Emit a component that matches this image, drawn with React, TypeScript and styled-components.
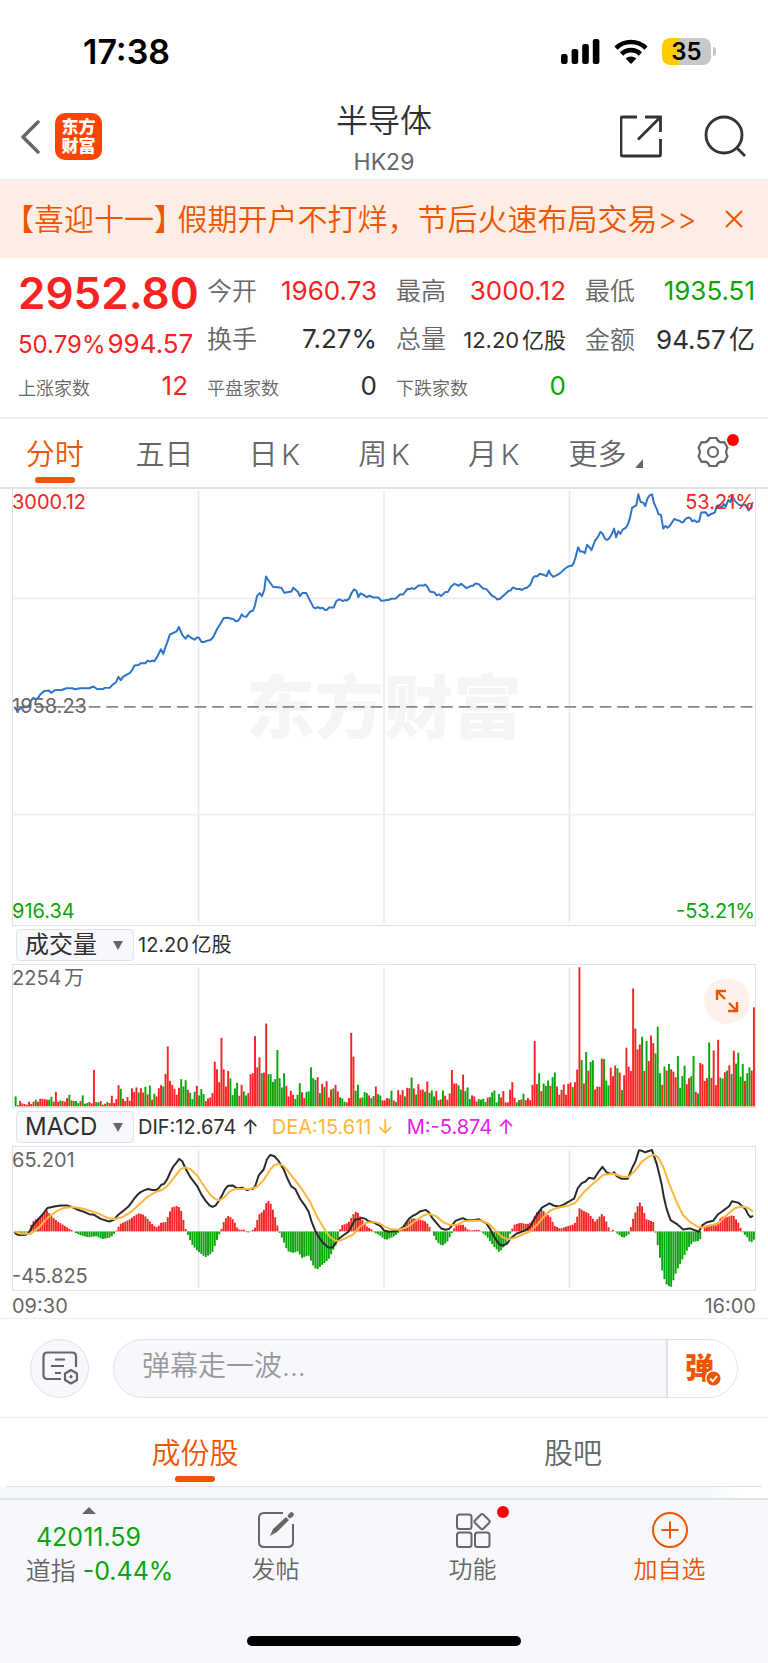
import React, { useId, useState } from 'react';
import styled, { createGlobalStyle, css } from 'styled-components';

const color = {
  accent: '#ee5500',
  up: '#f72323',
  down: '#0aa50a',
  ink: '#2f2f2f',
  label: '#666666',
  muted: '#999999',
  line: '#dfe2e8',
  grid: '#e6eaf1',
  panel: '#f7f8fb',
  dea: '#fdb73a',
  macd: '#e020e6',
};

const GlobalStyle = createGlobalStyle`
  *, *::before, *::after { box-sizing: border-box; }
  body {
    margin: 0;
    background: #fff;
    color: ${color.ink};
    font-family: Inter, "Noto Sans CJK SC", sans-serif;
    font-size: 24px;
    font-weight: 400;
    text-autospace: normal;
  }
  button, input, select { font: inherit; color: inherit; }
  button { border: 0; padding: 0; background: none; cursor: pointer; }
  a { color: inherit; text-decoration: none; }
  svg { display: block; }
`;

type Tone = 'up' | 'down' | 'ink' | 'label' | 'accent' | 'dea' | 'macd';

/* ---------- status bar and title ---------- */

const StatusBar = styled.div`
  display: flex;
  align-items: center;
  justify-content: space-between;
  height: 92px;
  padding: 10px 52px 0 83px;
  color: #000;
`;

const Clock = styled.time`
  font-size: 34px;
  font-weight: 600;
`;

const StatusIcons = styled.div`
  display: flex;
  align-items: center;
  gap: 14px;
`;

const Battery = styled.div`
  display: flex;
  align-items: center;
  gap: 2px;

  &::after {
    content: '';
    width: 3px;
    height: 9px;
    border-radius: 0 4px 4px 0;
    background: #c8c8c8;
  }
`;

const BatteryCell = styled.span<{ $level: number }>`
  width: 49px;
  height: 27px;
  border-radius: 8px;
  background: linear-gradient(90deg, #fc0 ${(p) => p.$level}%, #c8c8c8 ${(p) => p.$level}%);
  font-size: 24px;
  font-weight: 600;
  line-height: 27px;
  text-align: center;
`;

const Header = styled.header`
  display: grid;
  grid-template-columns: 1fr auto 1fr;
  align-items: center;
  height: 89px;
  padding: 0 20px;
  border-bottom: 2px solid #eceef2;
`;

const HeaderSide = styled.div<{ $end?: boolean }>`
  display: flex;
  align-items: center;
  justify-content: ${(p) => (p.$end ? 'flex-end' : 'flex-start')};
  gap: ${(p) => (p.$end ? 40 : 15)}px;
`;

const Logo = styled.a`
  display: grid;
  place-content: center;
  width: 47px;
  height: 47px;
  border-radius: 10px;
  background: #ff4400;
  color: #fff;
  font-size: 17px;
  font-weight: 900;
  line-height: 19px;
`;

const Titles = styled.div`
  display: flex;
  flex-direction: column;
  align-items: center;
  padding-top: 7px;
`;

const Title = styled.h1`
  margin: 0;
  font-size: 32px;
  font-weight: 350;
  line-height: 44px;
`;

const Code = styled.span`
  color: ${color.label};
  font-size: 23px;
  line-height: 38px;
`;

/* ---------- notice ---------- */

const Notice = styled.aside`
  display: flex;
  align-items: center;
  justify-content: space-between;
  height: 77px;
  padding: 0 25px 2px 19px;
  background: #fdede5;
  color: ${color.accent};
  white-space: nowrap;
`;

const NoticeText = styled.a`
  font-size: 30px;
  font-weight: 350;
  line-height: 40px;
`;

const HalfWidth = styled.span`
  font-feature-settings: 'halt';
`;

/* ---------- quote ---------- */

const Quote = styled.section`
  display: grid;
  grid-template-columns: repeat(4, minmax(0, 1fr));
  grid-auto-rows: 48px;
  align-items: center;
  column-gap: 19px;
  height: 161px;
  padding: 7px 13px 0 18px;
  border-bottom: 2px solid #eeeff2;
  white-space: nowrap;
`;

const Price = styled.strong`
  padding-top: 8px;
  color: ${color.up};
  font-size: 44px;
  font-weight: 600;
  line-height: 48px;
`;

const Change = styled.div`
  display: flex;
  align-items: baseline;
  gap: 2px;
  padding-top: 12px;
  color: ${color.up};
`;

const Stat = styled.div`
  display: flex;
  align-items: baseline;
  justify-content: space-between;
`;

const StatLabel = styled.span<{ $small?: boolean }>`
  color: ${color.label};
  font-size: ${(p) => (p.$small ? 18 : 25)}px;
  font-weight: 350;
`;

const Value = styled.span<{ $tone?: Tone; $size?: 22 | 24 | 26 }>`
  color: ${(p) => color[p.$tone ?? 'ink']};
  font-size: ${(p) => p.$size ?? 26}px;
`;

/* ---------- tabs ---------- */

const PeriodTabs = styled.nav`
  display: grid;
  grid-template-columns: repeat(7, minmax(0, 1fr));
  height: 70px;
  border-bottom: 2px solid ${color.line};
`;

const Tab = styled.button<{ $active?: boolean }>`
  position: relative;
  display: flex;
  align-items: center;
  justify-content: center;
  gap: 4px;
  padding-bottom: 2px;
  color: ${(p) => (p.$active ? color.accent : color.label)};
  font-size: 29px;
  font-weight: 350;

  ${(p) =>
    p.$active &&
    css`
      &::after {
        content: '';
        position: absolute;
        bottom: 4px;
        left: calc(50% - 20px);
        width: 40px;
        height: 6px;
        border-radius: 3px;
        background: ${color.accent};
      }
    `}
`;

const MoreTab = styled(Tab)`
  padding-left: 5px;
`;

const Corner = styled.svg`
  align-self: flex-end;
  margin: 0 0 17px 5px;
`;

const IconWithDot = styled.span`
  position: relative;
`;

const RedDot = styled.i<{ $far?: boolean }>`
  position: absolute;
  top: ${(p) => (p.$far ? -6 : -2)}px;
  right: ${(p) => (p.$far ? -18 : -10)}px;
  width: 12px;
  height: 12px;
  border-radius: 50%;
  background: #ff0000;
`;

/* ---------- charts ---------- */

const Charts = styled.section`
  padding: 0 12px;
`;

const Plot = styled.div<{ $height: number }>`
  position: relative;
  height: ${(p) => p.$height}px;
  border: solid ${color.line};
  border-width: 0 1px 1px;

  & > svg {
    position: relative;
    width: 100%;
    height: 100%;
  }
`;

const markPlace = {
  top: 'top: 0;',
  middle: 'top: calc(50% - 14px);',
  bottom: 'bottom: 0;',
};

const Mark = styled.span<{ $tone: Tone; $v: keyof typeof markPlace; $end?: boolean }>`
  position: absolute;
  ${(p) => (p.$end ? 'right: 0;' : 'left: -1px;')}
  ${(p) => markPlace[p.$v]}
  color: ${(p) => color[p.$tone]};
  font-size: 20px;
  line-height: 27px;
`;

const Watermark = styled.span`
  position: absolute;
  inset: 0;
  display: grid;
  place-items: center;
  padding-bottom: 8px;
  color: #f5f5f5;
  font-size: 69px;
  font-weight: 900;
`;

const IndicatorBar = styled.div`
  display: flex;
  align-items: center;
  gap: 4px;
  height: 39px;
  padding-left: 4px;
  border-bottom: 1px solid ${color.line};
`;

const Picker = styled.label`
  position: relative;
  display: block;
  width: 118px;
  height: 32px;

  svg {
    position: absolute;
    top: 12px;
    right: 11px;
    pointer-events: none;
  }
`;

const PickerSelect = styled.select`
  appearance: none;
  display: block;
  width: 100%;
  height: 100%;
  padding: 0 0 0 8px;
  border: 1px solid ${color.line};
  border-radius: 4px;
  background: ${color.panel};
  font-size: 24px;
  line-height: 28px;
`;

const Reading = styled.span<{ $tone: Tone }>`
  margin-right: 9px;
  color: ${(p) => color[p.$tone]};
  font-size: 20px;
  line-height: 28px;
`;

const ExpandButton = styled.button`
  position: absolute;
  top: 13px;
  right: 5px;
  display: grid;
  place-items: center;
  width: 46px;
  height: 46px;
  border-radius: 50%;
  background: #fdf1eb;
`;

const TimeAxis = styled.div`
  display: flex;
  justify-content: space-between;
  height: 27px;
  color: ${color.label};
  font-size: 20px;
  line-height: 31px;
`;

/* ---------- comment bar ---------- */

const CommentBar = styled.form`
  display: flex;
  align-items: center;
  gap: 24px;
  height: 100px;
  padding: 0 30px;
  border: solid #eceef2;
  border-width: 1px 0;
`;

const RoundButton = styled.button`
  display: grid;
  place-items: center;
  width: 59px;
  height: 59px;
  border: 1px solid ${color.line};
  border-radius: 50%;
  background: ${color.panel};
  color: ${color.label};
`;

const Pill = styled.div`
  display: flex;
  flex: 1;
  height: 59px;
  overflow: hidden;
  border: 1px solid ${color.line};
  border-radius: 30px;
  background: ${color.panel};
`;

const CommentInput = styled.input`
  flex: 1;
  min-width: 0;
  padding: 0 0 4px 28px;
  border: 0;
  outline: 0;
  background: none;
  font-size: 28px;
  font-weight: 350;

  &::placeholder {
    color: ${color.muted};
    opacity: 1;
  }
`;

const BulletToggle = styled.button`
  position: relative;
  width: 71px;
  padding: 0 6px 5px 0;
  border-left: 2px solid ${color.line};
  background: #fff;
  color: ${color.accent};
  font-size: 29px;
  font-weight: 900;

  svg {
    position: absolute;
    right: 15px;
    bottom: 10px;
  }
`;

/* ---------- bottom ---------- */

const SectionTabs = styled.nav`
  display: grid;
  grid-template-columns: 1fr 1fr;
  height: 69px;
  margin: 0 6px;
  border-bottom: 1px solid ${color.line};
`;

const Spacer = styled.div`
  height: 11px;
  background: linear-gradient(90deg, ${color.panel} 92%, #fff 96%);
`;

const BottomBar = styled.footer`
  padding-bottom: 17px;
  border-top: 2px solid ${color.line};
  background: ${color.panel};
`;

const Actions = styled.nav`
  display: grid;
  grid-template-columns: 177fr 197fr 197fr 197fr;
  height: 136px;
`;

const IndexLink = styled.a`
  display: flex;
  flex-direction: column;
  align-items: center;
  padding-top: 7px;
  color: ${color.down};
  font-size: 25px;
  line-height: 34px;
  white-space: nowrap;

  svg {
    margin-bottom: 6px;
  }
`;

const IndexRow = styled.span`
  display: flex;
  align-items: baseline;
  gap: 7px;
  padding-left: 22px;
`;

const Action = styled.button<{ $accent?: boolean }>`
  display: flex;
  flex-direction: column;
  align-items: center;
  gap: 4px;
  padding-top: 12px;
  color: ${(p) => (p.$accent ? color.accent : color.label)};
  font-size: 24px;
  font-weight: 350;
  line-height: 36px;
`;

const HomeIndicator = styled.div`
  width: 274px;
  height: 10px;
  margin: 0 auto;
  border-radius: 5px;
  background: #000;
`;

/* ---------- data ---------- */

/* Turnover per minute; a negative value marks a minute that closed lower. */
const volume = [
  -30, 4, 16, 9, 7, 5, 14, 7, 14, -20, 14, 23, 23, 22, 20, -20, -29, 14, 44, 14, -18, 16, 14, 25, -35, 18, -16, -16,
  -10, 16, -33, -8, -10, 13, 9, 110, -13, -12, 16, -5, 8, -13, 10, 32, 10, 22, 64, -53, 23, 16, 28, 17, 54, 44, 57,
  -42, 55, 42, -59, 36, -63, 20, -38, 30, 55, 64, -60, 98, 181, 77, 65, 53, 35, 56, -82, -60, -79, 50, -41, -22, -44,
  62, -33, -52, -37, 16, 24, 27, 40, 135, 112, 73, 207, 112, 60, 107, -84, -34, -54, -71, 32, 65, -45, -33, 40, 97,
  100, 212, 118, 148, -100, 102, 250, -97, -97, -74, -82, -170, -85, -57, -100, 62, 30, 47, 35, -22, -35, -70, 43, 25,
  -43, -45, -118, -85, -80, 88, -40, 68, -58, 76, 27, 51, -54, 65, 45, -27, -24, -14, 12, 25, 222, 150, -47, -65, 25,
  -27, -43, -40, 33, -25, -31, 60, -37, -33, 18, 18, 25, 23, -47, 18, -13, 49, 35, 49, -30, 56, 55, -87, 54, -36, 67,
  50, 51, -44, 75, -41, -48, -30, 46, -18, 21, -48, 32, 20, 39, 110, 69, 69, -63, -51, 96, -46, -57, -22, 33, 30, 15,
  -22, -20, -23, -13, 26, -28, -42, -48, -12, -37, 27, 46, 12, 12, 50, 73, 26, -12, -19, 21, -38, 19, 25, 19, 65, 197,
  67, -100, 46, -69, -62, -78, 62, -88, -102, 60, 35, 50, 66, 35, 68, 72, -58, 73, 111, 420, -140, 69, -164, 108, -134,
  -139, 51, 60, 59, 144, -143, -78, -63, 117, 91, 123, -115, 102, -49, 94, 177, 120, 107, 356, 235, 172, 187, -210,
  107, -198, 137, 214, 191, -160, -241, -100, 65, -120, 108, -128, 112, 105, 88, -152, -56, -92, -123, 67, 85, -91,
  -152, 44, -39, 131, 127, 77, 85, -193, 86, 169, 64, 201, -87, -84, 103, -108, 124, -98, 168, -129, -162, -90, -128,
  77, -100, -118, 108, 299,
];

const pricePath =
  '40,682 50,696 57,687 66,684 84,680 90,664 97,655 104,660 112,655 117,646 131,634 144,633 151,640 162,632 172,631 180,632 197,626 214,626 222,629 238,626 265,626 278,621 290,629 300,628 306,629 312,625 327,625 333,618 346,608 353,592 360,602 367,592 378,585 388,580 394,572 401,558 414,556 420,551 434,551 441,543 448,546 455,543 461,545 470,531 481,509 488,523 494,504 500,488 508,464 518,460 528,455 535,442 546,467 555,477 562,467 570,473 582,480 590,473 596,475 603,487 612,487 620,483 630,481 638,473 650,448 660,432 670,415 684,414 690,417 697,417 707,425 713,423 718,417 724,404 730,410 738,411 750,395 758,393 764,376 770,349 778,340 785,349 792,330 797,290 803,300 818,321 843,324 852,339 874,335 879,324 893,336 899,349 906,340 918,340 926,356 940,383 946,386 953,382 960,386 967,384 975,391 981,390 987,383 1001,383 1008,365 1015,359 1022,360 1028,364 1034,361 1040,362 1047,357 1055,339 1062,329 1069,333 1075,352 1081,341 1088,344 1100,352 1108,348 1120,353 1135,353 1143,363 1152,362 ' +
  '1167,360 1174,357 1188,356 1200,344 1210,344 1222,328 1230,328 1236,325 1243,328 1256,317 1272,317 1276,314 1282,320 1290,335 1304,338 1310,347 1318,344 1324,349 1336,337 1344,337 1354,320 1364,312 1377,318 1384,312 1400,325 1407,322 1414,318 1420,318 1427,311 1437,313 1450,326 1460,328 1477,348 1485,352 1493,359 1501,357 1522,338 1527,333 1533,332 1539,323 1552,328 1562,328 1567,331 1573,326 1582,324 1592,315 1601,293 1606,289 1614,289 1620,282 1632,285 1641,289 1648,272 1653,283 1661,291 1672,286 1682,280 1697,266 1708,259 1717,258 1723,249 1729,229 1736,202 1742,215 1750,215 1756,220 1763,195 1770,202 1776,211 1787,182 1795,172 1803,156 1809,161 1817,177 1823,180 1830,175 1838,161 1844,146 1850,172 1857,154 1863,162 1870,149 1880,143 1887,130 1892,113 1898,84 1911,76 1917,43 1924,66 1932,68 1938,78 1944,57 1951,46 1958,43 1964,69 1972,86 1978,103 1985,105 1992,146 1999,138 2005,144 2013,136 2025,117 2032,120 2040,122 2047,127 2052,127 2059,117 2067,113 2073,114 2079,124 2086,121 2092,126 2100,124 2106,98 2120,97 2127,108 2136,102 2147,98 2153,78 2160,76 2167,84 2174,72 2180,80 2188,60 2194,66 2200,46 2207,62 2219,74 2228,77 2239,74 2249,91 2256,83 2261,66';

const difPath =
  '40,395 47,402 55,404 75,403 85,395 94,378 110,358 125,342 140,322 160,318 180,315 200,315 215,320 235,329 250,334 265,341 280,343 300,355 325,363 340,358 350,345 370,329 385,316 400,295 410,283 420,274 430,269 442,265 455,268 467,268 475,262 482,252 490,250 500,235 510,212 520,194 528,185 536,174 545,181 555,203 570,230 590,256 603,282 615,300 627,314 636,319 645,315 655,301 665,284 673,267 683,255 697,254 710,263 725,261 740,268 750,265 757,265 765,255 775,224 790,206 800,175 810,162 822,166 835,180 850,205 860,230 873,257 885,265 900,295 912,312 925,333 935,366 947,395 957,412 970,429 985,442 998,441 1010,423 1020,412 1035,401 1045,394 1055,376 1065,357 1075,356 1087,352 1098,356 1105,362 1120,366 1130,371 1142,377 ' +
  '1152,390 1167,394 1192,392 1210,379 1227,355 1237,347 1249,341 1260,333 1277,328 1287,335 1297,352 1312,370 1324,384 1337,388 1347,386 1357,375 1367,361 1389,353 1402,359 1422,359 1437,356 1447,362 1460,369 1472,387 1487,415 1499,432 1509,436 1522,430 1532,415 1550,400 1577,390 1592,378 1607,350 1627,321 1642,313 1650,308 1662,315 1677,318 1692,312 1712,301 1724,294 1735,262 1747,247 1757,243 1769,231 1784,234 1797,214 1809,198 1822,215 1837,220 1844,214 1852,226 1867,234 1885,234 1897,205 1909,180 1919,148 1927,149 1937,154 1958,147 1964,165 1972,188 1980,220 1987,250 1994,290 2002,325 2014,359 2032,370 2052,387 2072,384 2099,394 2110,374 2122,366 2142,361 2157,341 2170,332 2190,317 2199,302 2217,306 2230,317 2239,325 2248,343 2255,350 2262,346';

const deaPath =
  '40,393 60,400 90,400 115,380 140,352 170,330 190,322 215,319 245,324 290,338 320,352 340,356 365,350 390,335 420,307 440,289 465,274 485,267 500,256 520,231 540,205 555,200 570,205 590,224 610,255 630,283 645,296 657,299 672,290 688,272 705,265 750,265 770,258 790,238 810,206 822,193 835,189 850,195 880,232 905,265 930,305 950,347 975,390 990,410 1005,421 1020,421 1040,412 1060,402 1080,378 1100,366 1125,365 1140,369 ' +
  '1152,378 1172,386 1197,388 1222,380 1247,361 1272,344 1287,340 1307,346 1332,366 1352,374 1372,373 1392,362 1442,360 1467,370 1487,390 1507,410 1527,417 1547,412 1567,403 1592,393 1612,373 1632,350 1652,330 1672,322 1707,315 1727,307 1752,276 1777,252 1797,235 1812,222 1842,219 1867,227 1887,229 1907,210 1927,183 1947,168 1964,161 1977,170 1992,198 2012,255 2032,304 2052,344 2072,364 2092,377 2107,381 2132,375 2157,369 2182,345 2207,323 2227,318 2245,321 2262,333';

/* Turning points of the MACD histogram: x, height above the zero line. */
const macdKnots: [number, number][] = [
  [40, -4], [75, -4], [84, 0], [90, 18], [100, 35], [115, 40], [138, 63], [145, 55], [155, 43], [170, 30], [190, 18],
  [205, 8], [218, 2], [222, -3], [240, -12], [265, -18], [285, -14], [305, -23], [330, -18], [343, -4], [350, 8],
  [358, 22], [385, 35], [413, 55], [430, 50], [455, 22], [467, 12], [478, 20], [485, 32], [492, 22], [505, 50],
  [512, 72], [530, 77], [540, 70], [550, 30], [556, 5], [562, -10], [575, -40], [590, -58], [615, -78], [635, -65],
  [650, -25], [658, -5], [665, 12], [672, 35], [685, 48], [700, 34], [712, 8], [720, 4], [730, 6], [738, -3],
  [748, -3], [756, 3], [765, 12], [775, 50], [790, 62], [800, 92], [808, 92], [820, 60], [833, 12], [838, -4],
  [850, -30], [862, -60], [880, -65], [893, -60], [905, -80], [925, -72], [940, -105], [950, -116], [965, -102],
  [985, -85], [1000, -55], [1013, -30], [1019, 4], [1024, 18], [1045, 26], [1060, 52], [1070, 62], [1085, 38],
  [1100, 15], [1115, 6], [1120, -2], [1140, -12], [1152, -23], [1160, -25], [1182, -15], [1196, -4], [1204, 6],
  [1217, 22], [1237, 40], [1262, 35], [1277, 30], [1287, 18], [1294, 4], [1298, -4], [1312, -32], [1327, -44],
  [1342, -32], [1355, -8], [1362, 8], [1372, 20], [1390, 20], [1402, 7], [1414, 2], [1427, 5], [1442, 4], [1448, -4],
  [1462, -16], [1482, -45], [1499, -63], [1514, -45], [1530, -10], [1536, 4], [1544, 20], [1562, 26], [1582, 22],
  [1597, 28], [1612, 58], [1627, 68], [1637, 55], [1652, 45], [1664, 18], [1682, 8], [1702, 15], [1725, 22],
  [1732, 40], [1740, 70], [1752, 62], [1767, 55], [1787, 30], [1810, 55], [1820, 32], [1832, 0], [1842, 5],
  [1852, -5], [1872, -20], [1889, -8], [1894, 10], [1902, 40], [1920, 90], [1932, 70], [1939, 38], [1964, 28],
  [1969, -5], [1977, -50], [1992, -135], [2002, -160], [2015, -170], [2032, -120], [2052, -80], [2067, -50],
  [2082, -32], [2102, -28], [2109, -5], [2114, 15], [2132, 20], [2152, 18], [2167, 45], [2182, 42], [2202, 50],
  [2217, 28], [2227, 5], [2232, -4], [2247, -20], [2255, -38], [2262, -25],
];

const minuteX = (i: number) => 44 + i * 6.73;

function heightAt(x: number) {
  const next = macdKnots.findIndex((k) => k[0] >= x);
  if (next <= 0) return macdKnots[next === 0 ? 0 : macdKnots.length - 1][1];
  const [x0, y0] = macdKnots[next - 1];
  const [x1, y1] = macdKnots[next];
  return y0 + ((y1 - y0) * (x - x0)) / (x1 - x0);
}

const macdBars = volume.map((_, i) => heightAt(minuteX(i)));

/* ---------- chart pieces ---------- */

function Columns({ top, bottom }: { top: number; bottom: number }) {
  return (
    <g stroke={color.grid} strokeWidth="5">
      {[594, 1152, 1710].map((x) => (
        <path key={x} d={`M${x} ${top}V${bottom}`} />
      ))}
    </g>
  );
}

/* Bars from a base line; with `split`, negative values hang below it. */
function Bars({ values, base, split }: { values: number[]; base: number; split?: boolean }) {
  return (
    <g>
      {values.map((v, i) => (
        <rect
          key={i}
          x={minuteX(i) - 3}
          y={split && v < 0 ? base : base - Math.abs(v)}
          width="5.8"
          height={Math.abs(v)}
          fill={v < 0 ? color.down : color.up}
        />
      ))}
    </g>
  );
}

function PriceChart() {
  return (
    <Plot $height={437}>
      <Watermark>东方财富</Watermark>
      <svg viewBox="36 27 2232 1311" preserveAspectRatio="none" aria-label="分时走势">
        <Columns top={32} bottom={1331} />
        <path d="M38 356H2266M38 1006H2266" stroke="#eceff4" strokeWidth="5" />
        <path d="M52 682H2260" stroke="#888" strokeWidth="5" strokeDasharray="35 18" />
        <polyline points={pricePath} fill="none" stroke="#2f74c8" strokeWidth="6" strokeLinejoin="round" />
      </svg>
      <Mark $tone="up" $v="top">3000.12</Mark>
      <Mark $tone="up" $v="top" $end>53.21%</Mark>
      <Mark $tone="label" $v="middle">1958.23</Mark>
      <Mark $tone="down" $v="bottom">916.34</Mark>
      <Mark $tone="down" $v="bottom" $end>-53.21%</Mark>
    </Plot>
  );
}

function VolumeChart() {
  return (
    <Plot $height={143}>
      <svg viewBox="36 193 2232 429" preserveAspectRatio="none" aria-label="成交量">
        <Columns top={200} bottom={620} />
        <Bars values={volume} base={620} />
      </svg>
      <Mark $tone="label" $v="top">2254万</Mark>
      <ExpandButton type="button" aria-label="全屏">
        <svg width="24" height="24" viewBox="0 0 24 24" fill="none" stroke={color.accent} strokeWidth="2.4">
          <path d="M2 11V2h9M2 2l8 8M22 13v9h-9M22 22l-8-8" />
        </svg>
      </ExpandButton>
    </Plot>
  );
}

function MacdChart() {
  return (
    <Plot $height={144}>
      <svg viewBox="36 138 2232 432" preserveAspectRatio="none" aria-label="MACD">
        <Columns top={147} bottom={564} />
        <Bars values={macdBars} base={393} split />
        <polyline points={difPath} fill="none" stroke="#2b2b2b" strokeWidth="6" strokeLinejoin="round" />
        <polyline points={deaPath} fill="none" stroke={color.dea} strokeWidth="6" strokeLinejoin="round" />
      </svg>
      <Mark $tone="label" $v="top">65.201</Mark>
      <Mark $tone="label" $v="bottom">-45.825</Mark>
    </Plot>
  );
}

function IndicatorPicker({ label, options }: { label: string; options: string[] }) {
  const id = useId();
  return (
    <Picker htmlFor={id}>
      <PickerSelect id={id} aria-label={label} defaultValue={options[0]}>
        {options.map((o) => (
          <option key={o}>{o}</option>
        ))}
      </PickerSelect>
      <svg width="10" height="9" viewBox="0 0 10 9">
        <path d="M0 0h10L5 9z" fill={color.label} />
      </svg>
    </Picker>
  );
}

/* ---------- page ---------- */

const stats: { label: string; value: string; tone?: Tone; size?: 22 }[][] = [
  [
    { label: '今开', value: '1960.73', tone: 'up' },
    { label: '最高', value: '3000.12', tone: 'up' },
    { label: '最低', value: '1935.51', tone: 'down' },
  ],
  [
    { label: '换手', value: '7.27%' },
    { label: '总量', value: '12.20亿股', size: 22 },
    { label: '金额', value: '94.57亿' },
  ],
];

const counts: { label: string; value: string; tone: Tone }[] = [
  { label: '上涨家数', value: '12', tone: 'up' },
  { label: '平盘家数', value: '0', tone: 'ink' },
  { label: '下跌家数', value: '0', tone: 'down' },
];

const periods = ['分时', '五日', '日K', '周K', '月K'];

function StatRow({ items }: { items: (typeof stats)[number] }) {
  return (
    <>
      {items.map((s) => (
        <Stat key={s.label}>
          <StatLabel>{s.label}</StatLabel>
          <Value $tone={s.tone} $size={s.size}>{s.value}</Value>
        </Stat>
      ))}
    </>
  );
}

export default function App() {
  const [period, setPeriod] = useState('分时');
  const [section, setSection] = useState('成份股');

  return (
    <>
      <GlobalStyle />
      <StatusBar>
        <Clock>17:38</Clock>
        <StatusIcons>
          <svg width="39" height="25" viewBox="0 0 39 25" fill="#000">
            <rect x="0" y="15" width="6.6" height="10" rx="2.2" />
            <rect x="10.6" y="10" width="6.6" height="15" rx="2.2" />
            <rect x="21.2" y="5" width="6.6" height="20" rx="2.2" />
            <rect x="31.8" y="0" width="6.6" height="25" rx="2.2" />
          </svg>
          <svg width="34" height="25" viewBox="0 0 34 25" fill="none" stroke="#000" strokeWidth="4.6">
            <path d="M2 9.1a21.5 21.5 0 0 1 30 0" />
            <path d="M7.6 15a13.4 13.4 0 0 1 18.8 0" />
            <path d="M17 25l-5.4-5.4a7.8 7.8 0 0 1 10.8 0z" fill="#000" stroke="none" />
          </svg>
          <Battery>
            <BatteryCell $level={35}>35</BatteryCell>
          </Battery>
        </StatusIcons>
      </StatusBar>

      <Header>
        <HeaderSide>
          <button type="button" aria-label="返回">
            <svg width="20" height="34" viewBox="0 0 20 34" fill="none" stroke="#666" strokeWidth="3.4" strokeLinecap="round" strokeLinejoin="round">
              <path d="M18 2L3 17l15 15" />
            </svg>
          </button>
          <Logo href="#home">
            <span>东方</span>
            <span>财富</span>
          </Logo>
        </HeaderSide>
        <Titles>
          <Title>半导体</Title>
          <Code>HK29</Code>
        </Titles>
        <HeaderSide $end>
          <button type="button" aria-label="分享">
            <svg width="44" height="44" viewBox="0 0 44 44" fill="none" stroke="#333" strokeWidth="2.8">
              <path d="M17 2H2.500Q1 2 1 3.500V39.500Q1 41 2.500 41H39Q40.500 41 40.500 39.500V24" />
              <path d="M25 2H40.500V17M40 2.500L18 24.500" />
            </svg>
          </button>
          <button type="button" aria-label="搜索">
            <svg width="44" height="44" viewBox="0 0 44 44" fill="none" stroke="#333" strokeWidth="2.8">
              <circle cx="20" cy="20" r="18" />
              <path d="M32 32l9 9" />
            </svg>
          </button>
        </HeaderSide>
      </Header>

      <Notice>
        <NoticeText href="#notice">
          <HalfWidth>【喜迎十一】</HalfWidth> 假期开户不打烊，节后火速布局交易&gt;&gt;
        </NoticeText>
        <button type="button" aria-label="关闭">
          <svg width="18" height="18" viewBox="0 0 18 18" stroke={color.accent} strokeWidth="2">
            <path d="M1 1l16 16M17 1L1 17" />
          </svg>
        </button>
      </Notice>

      <Quote>
        <Price>2952.80</Price>
        <StatRow items={stats[0]} />
        <Change>
          <Value $tone="up" $size={24}>50.79%</Value>
          <Value $tone="up">994.57</Value>
        </Change>
        <StatRow items={stats[1]} />
        {counts.map((c) => (
          <Stat key={c.label}>
            <StatLabel $small>{c.label}</StatLabel>
            <Value $tone={c.tone}>{c.value}</Value>
          </Stat>
        ))}
      </Quote>

      <PeriodTabs>
        {periods.map((p) => (
          <Tab key={p} type="button" $active={p === period} onClick={() => setPeriod(p)}>
            {p}
          </Tab>
        ))}
        <MoreTab type="button">
          更多
          <Corner width="8" height="9" viewBox="0 0 8 9">
            <path d="M8 0v9H0z" fill={color.label} />
          </Corner>
        </MoreTab>
        <Tab type="button" aria-label="设置">
          <IconWithDot>
            <svg width="32" height="32" viewBox="0 0 32 32" fill="none" stroke={color.label} strokeWidth="2.2" strokeLinejoin="round">
              <path d="M12.500 2h7q1.400 3.800 4.400 4.300l3.600-.1 3 5.500q-2.800 4.300 0 8.600l-3 5.500-3.600-.1q-3 .5-4.400 4.300h-7q-1.400-3.800-4.400-4.300l-3.600.1-3-5.500q2.800-4.300 0-8.600l3-5.500 3.600.1q3-.5 4.400-4.300z" />
              <circle cx="16" cy="16" r="5" />
            </svg>
            <RedDot />
          </IconWithDot>
        </Tab>
      </PeriodTabs>

      <Charts>
        <PriceChart />
        <IndicatorBar>
          <IndicatorPicker label="成交指标" options={['成交量', '成交额']} />
          <Reading $tone="ink">12.20亿股</Reading>
        </IndicatorBar>
        <VolumeChart />
        <IndicatorBar>
          <IndicatorPicker label="技术指标" options={['MACD', 'KDJ', 'RSI']} />
          <Reading $tone="ink">DIF:12.674 ↑</Reading>
          <Reading $tone="dea">DEA:15.611 ↓</Reading>
          <Reading $tone="macd">M:-5.874 ↑</Reading>
        </IndicatorBar>
        <MacdChart />
        <TimeAxis>
          <span>09:30</span>
          <span>16:00</span>
        </TimeAxis>
      </Charts>

      <CommentBar onSubmit={(e) => e.preventDefault()}>
        <RoundButton type="button" aria-label="弹幕设置">
          <svg width="36" height="34" viewBox="0 0 36 34" fill="none" stroke="currentColor" strokeWidth="2.200">
            <path d="M19 28H5.500Q1.500 28 1.500 24V5.500Q1.500 1.500 5.500 1.500H30Q34 1.500 34 5.500V16" />
            <path d="M13 8.500h10M9 15h13M13 22h6" />
            <path d="M29 19l6 3.500v6.500l-6 3.500-6-3.500v-6.500z" strokeLinejoin="round" />
            <circle cx="29" cy="25.800" r="1.200" fill="currentColor" strokeWidth="1" />
          </svg>
        </RoundButton>
        <Pill>
          <CommentInput type="text" aria-label="弹幕" placeholder="弹幕走一波..." />
          <BulletToggle type="button" aria-label="弹幕开关">
            弹
            <svg width="17" height="17" viewBox="0 0 17 17">
              <circle cx="8.500" cy="8.500" r="7.700" fill={color.accent} stroke="#fff" strokeWidth="1.400" />
              <path d="M5 8.500l2.800 2.800L12 6" fill="none" stroke="#fff" strokeWidth="1.800" />
            </svg>
          </BulletToggle>
        </Pill>
      </CommentBar>

      <SectionTabs>
        {['成份股', '股吧'].map((s) => (
          <Tab key={s} type="button" $active={s === section} onClick={() => setSection(s)}>
            {s}
          </Tab>
        ))}
      </SectionTabs>
      <Spacer />

      <BottomBar>
        <Actions>
          <IndexLink href="#index">
            <svg width="14" height="7" viewBox="0 0 14 7">
              <path d="M7 0l7 7H0z" fill={color.label} />
            </svg>
            <span>42011.59</span>
            <IndexRow>
              <StatLabel>道指</StatLabel>
              <span>-0.44%</span>
            </IndexRow>
          </IndexLink>
          <Action type="button">
            <svg width="36" height="36" viewBox="0 0 36 36" fill="none" stroke="currentColor" strokeWidth="2">
              <path d="M25 1H6Q1 1 1 6V30Q1 35 6 35H30Q35 35 35 30V12" />
              <path d="M12 24l3-7L28 5l3 3-12 12z" fill="currentColor" stroke="none" />
              <path d="M32 4l1.500-1.500" strokeWidth="4.500" strokeLinecap="round" />
            </svg>
            发帖
          </Action>
          <Action type="button">
            <IconWithDot>
              <svg width="36" height="36" viewBox="0 0 36 36" fill="none" stroke="currentColor" strokeWidth="2">
                <rect x="2" y="2.500" width="14.500" height="14.500" rx="2.500" />
                <rect x="2" y="20.500" width="14.500" height="14.500" rx="2.500" />
                <rect x="20" y="20.500" width="14.500" height="14.500" rx="2.500" />
                <rect x="21.200" y="3.700" width="11.800" height="11.800" rx="2" transform="rotate(45 27.100 9.600)" />
              </svg>
              <RedDot $far />
            </IconWithDot>
            功能
          </Action>
          <Action type="button" $accent>
            <svg width="36" height="36" viewBox="0 0 36 36" fill="none" stroke="currentColor" strokeWidth="2">
              <circle cx="18" cy="18" r="17" />
              <path d="M9.500 18h17M18 9.500v17" />
            </svg>
            加自选
          </Action>
        </Actions>
        <HomeIndicator />
      </BottomBar>
    </>
  );
}
